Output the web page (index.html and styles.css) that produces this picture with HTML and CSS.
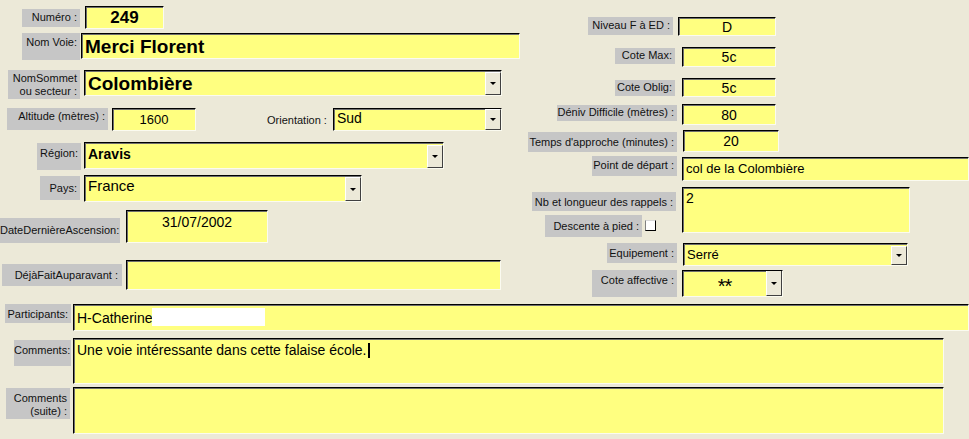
FILE: index.html
```html
<!DOCTYPE html>
<html lang="fr">
<head>
  <meta charset="UTF-8" />
  <title>Voie – Merci Florent</title>
  <link rel="stylesheet" href="styles.css">
</head>
<body>
  <div class="form">
    <div class="top">
      <!-- colonne gauche -->
      <div class="col-left">
        <div class="row r-num">
          <span class="lbl">Numéro :</span>
          <div class="fld center">249</div>
        </div>
        <div class="row r-voie">
          <span class="lbl">Nom Voie:</span>
          <div class="fld">Merci Florent</div>
        </div>
        <div class="row r-sommet">
          <span class="lbl">NomSommet<br>ou secteur :</span>
          <div class="fld combo"><span class="val">Colombière</span><span class="drop"></span></div>
        </div>
        <div class="row r-alt">
          <span class="lbl">Altitude (mètres) :</span>
          <div class="fld center alt">1600</div>
          <span class="plain">Orientation :</span>
          <div class="fld combo orient"><span class="val">Sud</span><span class="drop"></span></div>
        </div>
        <div class="row r-region">
          <span class="lbl">Région:</span>
          <div class="fld combo"><span class="val">Aravis</span><span class="drop"></span></div>
        </div>
        <div class="row r-pays">
          <span class="lbl">Pays:</span>
          <div class="fld combo"><span class="val">France</span><span class="drop"></span></div>
        </div>
        <div class="row r-date">
          <span class="lbl">DateDernièreAscension:</span>
          <div class="fld center">31/07/2002</div>
        </div>
        <div class="row r-deja">
          <span class="lbl">DéjàFaitAuparavant :</span>
          <div class="fld"></div>
        </div>
      </div>

      <!-- colonne droite -->
      <div class="col-right">
        <div class="row rr-niv">
          <span class="lbl">Niveau F à ED :</span>
          <div class="fld center">D</div>
        </div>
        <div class="row rr-max">
          <span class="lbl">Cote Max:</span>
          <div class="fld center">5c</div>
        </div>
        <div class="row rr-oblig">
          <span class="lbl">Cote Oblig:</span>
          <div class="fld center">5c</div>
        </div>
        <div class="row rr-deniv">
          <span class="lbl">Déniv Difficile (mètres) :</span>
          <div class="fld center">80</div>
        </div>
        <div class="row rr-temps">
          <span class="lbl">Temps d'approche (minutes) :</span>
          <div class="fld center">20</div>
        </div>
        <div class="row rr-depart">
          <span class="lbl">Point de départ :</span>
          <div class="fld">col de la Colombière</div>
        </div>
        <div class="row rr-rappels">
          <div class="stack">
            <span class="lbl l-rappels">Nb et longueur des rappels :</span>
            <div class="desc-row">
              <span class="lbl l-desc">Descente à pied :</span>
              <span class="check"></span>
            </div>
          </div>
          <div class="fld">2</div>
        </div>
        <div class="row rr-equip">
          <span class="lbl">Equipement :</span>
          <div class="fld combo"><span class="val">Serré</span><span class="drop"></span></div>
        </div>
        <div class="row rr-affect">
          <span class="lbl">Cote affective :</span>
          <div class="fld combo"><span class="val stars">**</span><span class="drop"></span></div>
        </div>
      </div>
    </div>

    <div class="bottom">
      <div class="row b-part">
        <span class="lbl">Participants:</span>
        <div class="fld">H-Catherine<span class="blank"></span></div>
      </div>
      <div class="row b-comm">
        <span class="lbl">Comments:</span>
        <div class="fld">Une voie intéressante dans cette falaise école.<span class="caret"></span></div>
      </div>
      <div class="row b-suite">
        <span class="lbl">Comments<br>(suite) :</span>
        <div class="fld"></div>
      </div>
    </div>
  </div>
</body>
</html>
```

FILE: styles.css
```css
body {
  margin: 0;
  background: #ece9d8;
  font-family: "Liberation Sans", Arial, sans-serif;
  font-size: 11px;
  color: #000;
  width: 969px;
  height: 439px;
  overflow: hidden;
}

.top {
  display: flex;
  align-items: flex-start;
}

.col-left {
  width: 525px;
  flex: none;
}

.col-right {
  flex: 1;
}

.row {
  display: flex;
  align-items: flex-start;
}

/* labels gris */
.lbl {
  display: block;
  flex: none;
  box-sizing: border-box;
  background: #c6c6c6;
  color: #111;
  text-align: right;
  padding: 2px 3px 0 0;
  line-height: 13px;
  white-space: nowrap;
}

.plain {
  flex: none;
  line-height: 13px;
  color: #111;
}

/* champs jaunes */
.fld {
  display: flex;
  align-items: flex-start;
  flex: none;
  box-sizing: border-box;
  background: #ffff80;
  border-top: 1px solid #000;
  border-left: 1px solid #000;
  border-right: 1px solid #fbfbf0;
  border-bottom: 1px solid #fbfbf0;
  box-shadow: inset 1px 1px 0 #6f6f6f;
  padding: 2px 0 0 3px;
  font-size: 14px;
  line-height: 16px;
  white-space: nowrap;
  overflow: hidden;
}

.fld.center {
  justify-content: center;
  padding-left: 0;
}

.combo .val {
  flex: 1;
}

.drop {
  flex: none;
  align-self: stretch;
  width: 16px;
  margin-top: -1px;
  box-sizing: border-box;
  background: #ece9d8;
  border: 1px solid;
  border-color: #fff #404040 #404040 #fff;
  display: flex;
  align-items: center;
  justify-content: center;
}

.drop::after {
  content: "";
  width: 0;
  height: 0;
  border-left: 3px solid transparent;
  border-right: 3px solid transparent;
  border-top: 3px solid #000;
}

/* ---- colonne gauche ---- */
.r-num { margin-top: 6px; }
.r-num .lbl { margin: 3px 0 0 22px; width: 58px; height: 18px; }
.r-num .fld { margin-left: 5px; width: 79px; height: 23px; font-weight: bold; font-size: 17px; line-height: 19px; padding-top: 1px; }

.r-voie { margin-top: 4px; }
.r-voie .lbl { margin-left: 22px; width: 58px; height: 27px; padding-top: 3px; }
.r-voie .fld { margin-left: 1px; width: 439px; height: 26px; font-weight: bold; font-size: 19px; line-height: 22px; padding-top: 2px; }

.r-sommet { margin-top: 10px; }
.r-sommet .lbl { margin-left: 8px; width: 72px; height: 29px; padding-top: 2px; }
.r-sommet .fld { margin-left: 4px; width: 418px; height: 26px; font-weight: bold; font-size: 19px; line-height: 22px; padding-top: 2px; }

.r-alt { margin-top: 9px; }
.r-alt .lbl { margin-left: 7px; width: 101px; height: 22px; }
.r-alt .alt { margin-left: 4px; width: 84px; height: 23px; font-size: 13px; padding-top: 3px; }
.r-alt .plain { margin: 6px 0 0 71px; width: 62px; }
.r-alt .orient { margin-left: 4px; width: 169px; height: 23px; padding-top: 1px; }

.r-region { margin-top: 11px; }
.r-region .lbl { margin: 1px 0 0 37px; width: 44px; height: 27px; padding-top: 4px; }
.r-region .fld { margin-left: 3px; width: 360px; height: 27px; font-weight: bold; padding-top: 3px; }

.r-pays { margin-top: 5px; }
.r-pays .lbl { margin: 1px 0 0 40px; width: 40px; height: 24px; padding-top: 6px; }
.r-pays .fld { margin-left: 4px; width: 278px; height: 27px; font-size: 15px; padding-top: 2px; }

.r-date { margin-top: 8px; }
.r-date .lbl { margin-top: 8px; width: 120px; height: 25px; padding-top: 6px; }
.r-date .fld { margin-left: 6px; width: 142px; height: 33px; padding-top: 3px; }

.r-deja { margin-top: 17px; }
.r-deja .lbl { margin: 4px 0 0 2px; width: 120px; height: 22px; padding: 5px 4px 0 0; }
.r-deja .fld { margin-left: 4px; width: 375px; height: 30px; }

/* ---- colonne droite ---- */
.rr-niv { margin-top: 17px; }
.rr-niv .lbl { margin-left: 63px; width: 85px; height: 18px; }
.rr-niv .fld { margin-left: 5px; width: 98px; height: 19px; padding-top: 1px; }

.rr-max { margin-top: 11px; }
.rr-max .lbl { margin: 1px 0 0 90px; width: 60px; height: 16px; padding-top: 1px; }
.rr-max .fld { margin-left: 7px; width: 94px; height: 20px; padding-top: 1px; }

.rr-oblig { margin-top: 11px; }
.rr-oblig .lbl { margin: 2px 0 0 90px; width: 60px; height: 16px; padding-top: 1px; }
.rr-oblig .fld { margin-left: 7px; width: 94px; height: 19px; padding-top: 1px; }

.rr-deniv { margin-top: 7px; }
.rr-deniv .lbl { margin: 1px 0 0 32px; width: 120px; height: 16px; padding-top: 1px; }
.rr-deniv .fld { margin-left: 5px; width: 94px; height: 21px; padding-top: 2px; }

.rr-temps { margin-top: 5px; }
.rr-temps .lbl { margin: 2px 0 0 3px; width: 149px; height: 20px; padding-top: 4px; }
.rr-temps .fld { margin-left: 6px; width: 96px; height: 22px; padding-top: 2px; }

.rr-depart { margin-top: 4px; }
.rr-depart .lbl { margin-left: 67px; width: 85px; height: 20px; padding-top: 3px; }
.rr-depart .fld { margin: 1px 0 0 5px; width: 287px; height: 24px; font-size: 13px; padding-top: 3px; }

.rr-rappels { margin-top: 6px; }
.stack {
  margin-left: 7px;
  width: 144px;
  display: flex;
  flex-direction: column;
}
.l-rappels { margin-top: 5px; width: 144px; height: 19px; padding-top: 4px; }
.desc-row { display: flex; align-items: flex-start; margin-top: 4px; }
.l-desc { margin-left: 13px; width: 97px; height: 22px; padding-top: 5px; }
.check {
  flex: none;
  margin: 5px 0 0 3px;
  width: 11px;
  height: 11px;
  box-sizing: border-box;
  background: #fff;
  border: 1px solid;
  border-color: #d8d8d8 #000 #000 #808080;
}
.rr-rappels .fld { margin-left: 6px; width: 228px; height: 46px; padding-top: 2px; }

.rr-equip { margin-top: 6px; }
.rr-equip .lbl { margin-left: 82px; width: 70px; height: 20px; padding-top: 4px; }
.rr-equip .fld { margin-left: 6px; width: 225px; height: 23px; font-size: 13px; padding-top: 3px; }

.rr-affect { margin-top: 4px; }
.rr-affect .lbl { margin-left: 67px; width: 85px; height: 27px; padding-top: 4px; }
.rr-affect .fld { margin-left: 5px; width: 101px; height: 27px; padding: 0; }
.stars { text-align: center; font-size: 20px; line-height: 20px; padding-top: 5px; letter-spacing: -1px; }

/* ---- bas du formulaire ---- */
.b-part { margin-top: 7px; }
.b-part .lbl { margin-left: 5px; width: 66px; height: 19px; padding-top: 4px; }
.b-part .fld { margin-left: 2px; width: 896px; height: 27px; font-size: 14px; padding-top: 5px; }
.blank {
  display: inline-block;
  width: 113px;
  height: 18px;
  margin-top: -2px;
  background: #fff;
}

.b-comm { margin-top: 7px; }
.b-comm .lbl { margin: 2px 0 0 14px; width: 57px; height: 26px; padding-top: 4px; }
.b-comm .fld { margin-left: 2px; width: 871px; height: 46px; padding-top: 3px; }
.caret {
  display: inline-block;
  width: 2px;
  height: 15px;
  margin: 1px 0 0 1px;
  background: #000;
}

.b-suite { margin-top: 3px; }
.b-suite .lbl { margin: 1px 0 0 6px; width: 64px; height: 31px; padding-top: 4px; }
.b-suite .fld { margin-left: 3px; width: 871px; height: 47px; }
```
